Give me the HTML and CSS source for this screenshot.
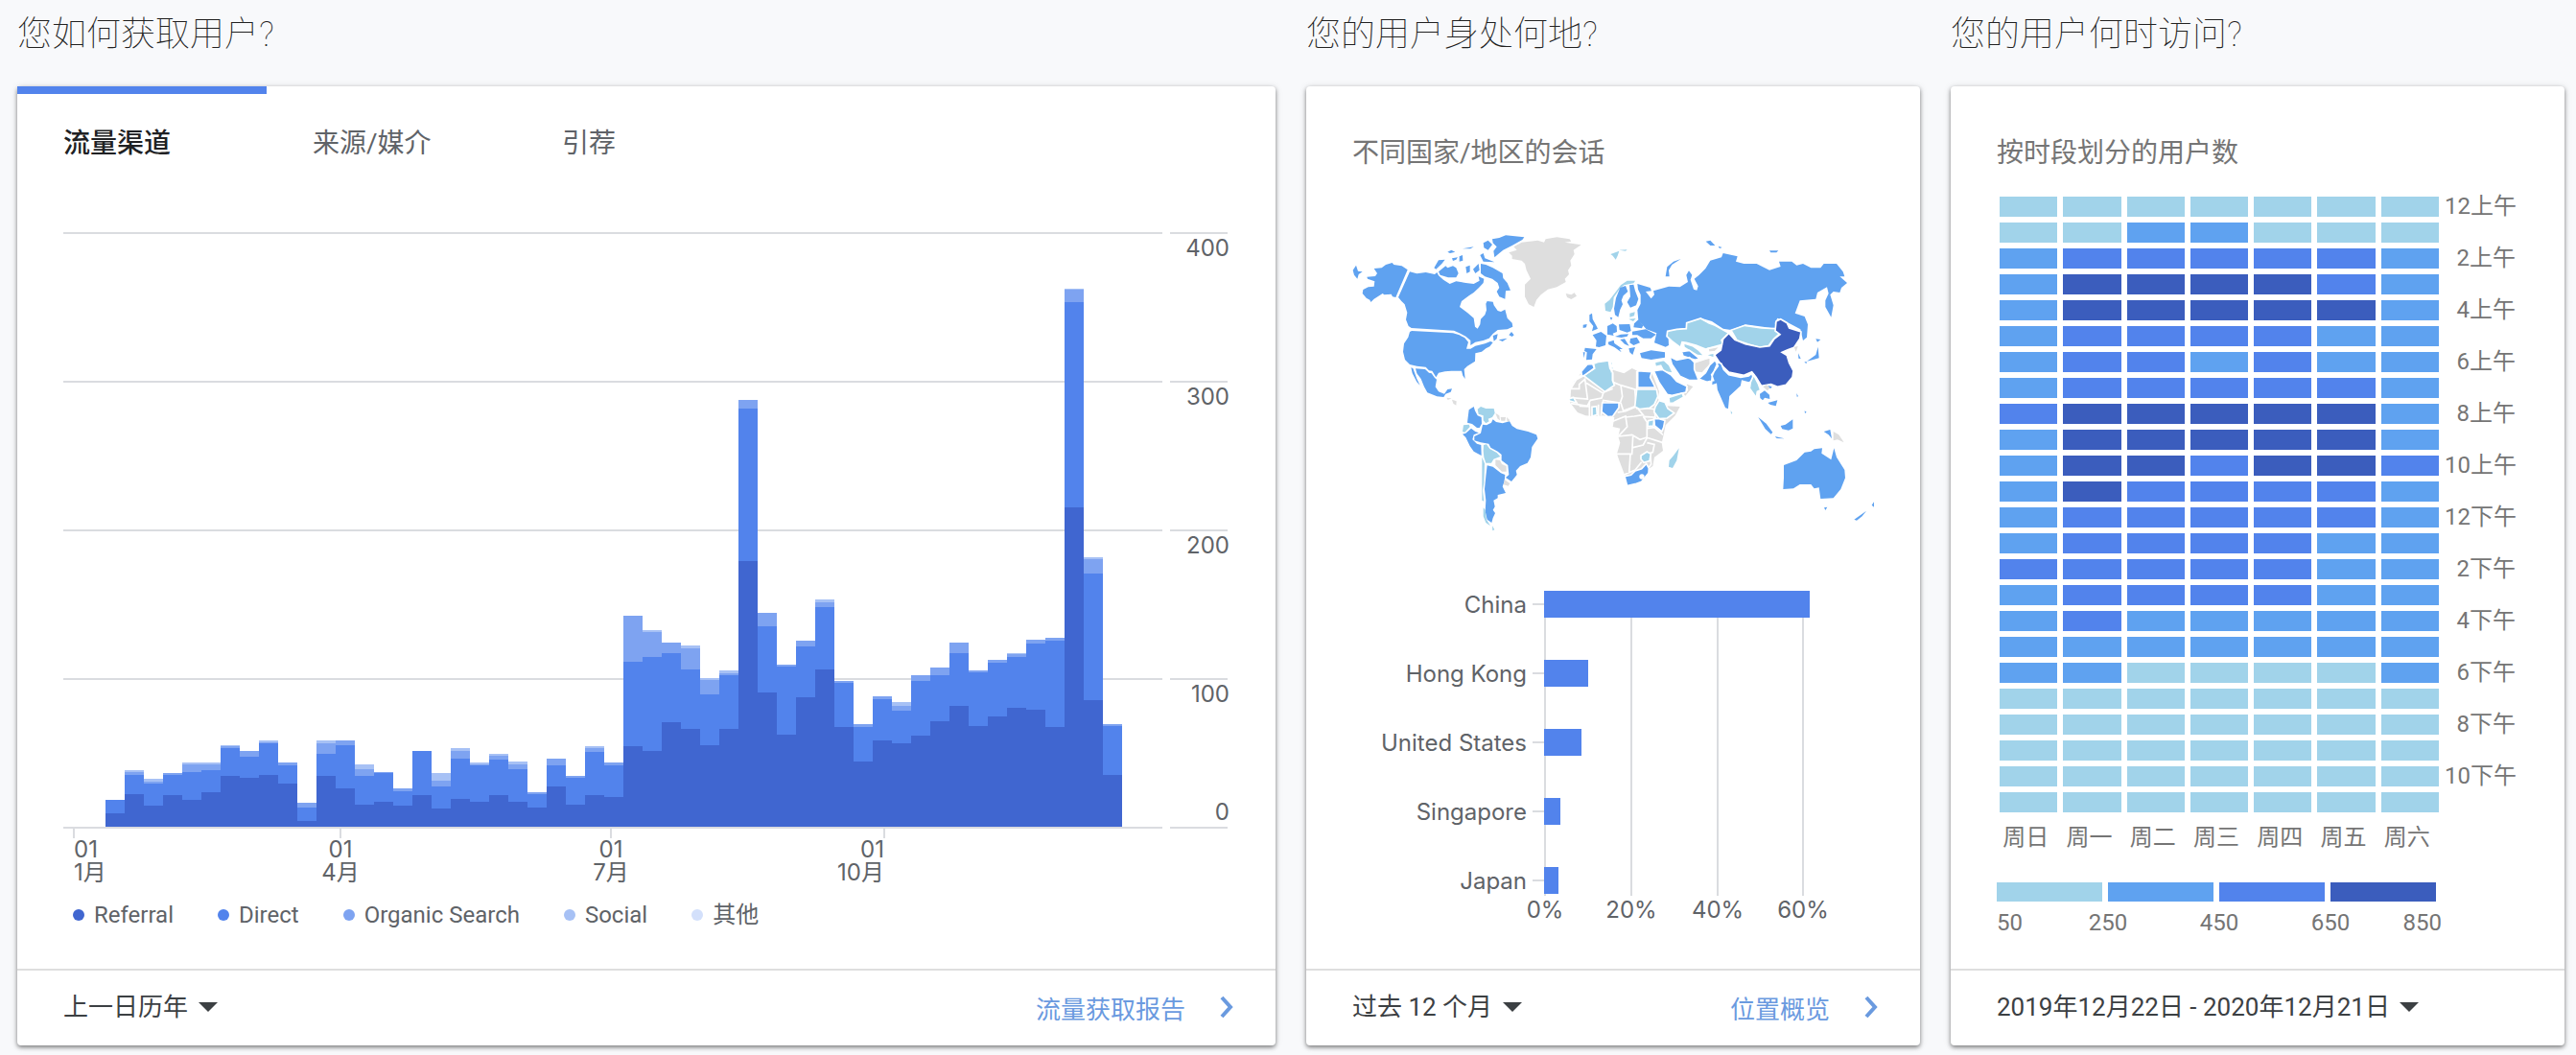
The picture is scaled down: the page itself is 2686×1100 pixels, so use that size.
FILE: index.html
```html
<!DOCTYPE html>
<html lang="zh-CN">
<head>
<meta charset="utf-8">
<meta name="viewport" content="width=device-width, initial-scale=1">
<title>流量与用户概览</title>
<link rel="stylesheet" href="styles.css">
</head>
<body>
<main class="dashboard">

  <section class="panel">
    <h2 class="panel-title">您如何获取用户?</h2>
    <article class="card">
      <div class="card-body">
        <div class="tabs" role="tablist">
          <button class="tab is-active" type="button" role="tab" aria-selected="true">流量渠道</button>
          <button class="tab" type="button" role="tab" aria-selected="false">来源/媒介</button>
          <button class="tab" type="button" role="tab" aria-selected="false">引荐</button>
        </div>
        <svg class="channel-chart" viewBox="0 0 1216 684" role="img" aria-label="流量渠道">
          <g class="grid">
            <path d="M0 1H1146M1154 1H1214M0 156H1146M1154 156H1214M0 311H1146M1154 311H1214M0 466H1146M1154 466H1214M0 621H1146M1154 621H1214"/>
            <path d="M11 622V632M289 622V632M571 622V632M856 622V632"/>
          </g>
          <g id="channel-bars" shape-rendering="crispEdges"></g>
          <g class="axis" text-anchor="end">
            <text x="1216" y="25">400</text>
            <text x="1216" y="180">300</text>
            <text x="1216" y="335">200</text>
            <text x="1216" y="490">100</text>
            <text x="1216" y="613">0</text>
          </g>
          <g class="axis">
            <text x="11" y="652">01</text><text x="11" y="676">1月</text>
            <g text-anchor="middle">
              <text x="289" y="652">01</text><text x="289" y="676">4月</text>
              <text x="571" y="652">01</text><text x="571" y="676">7月</text>
            </g>
            <g text-anchor="end">
              <text x="856" y="652">01</text><text x="856" y="676">10月</text>
            </g>
          </g>
        </svg>
        <ul class="series">
          <li class="series-item referral">Referral</li>
          <li class="series-item direct">Direct</li>
          <li class="series-item organic">Organic Search</li>
          <li class="series-item social">Social</li>
          <li class="series-item other">其他</li>
        </ul>
      </div>
      <footer class="card-footer">
        <label class="range">
          <select class="range-select" aria-label="日期范围"><option>上一日历年</option></select>
          <svg class="caret" viewBox="0 0 20 10" aria-hidden="true"><path d="M0 0H20L10 10Z"/></svg>
        </label>
        <a class="report-link" href="#acquisition">流量获取报告
          <svg class="chevron" viewBox="0 0 14 24" aria-hidden="true"><path d="M2 2L11 12L2 22"/></svg>
        </a>
      </footer>
    </article>
  </section>

  <section class="panel">
    <h2 class="panel-title">您的用户身处何地?</h2>
    <article class="card">
      <div class="card-body">
        <h3 class="chart-title">不同国家/地区的会话</h3>
        <svg class="world-map" viewBox="60 0 1632 1050" role="img" aria-label="世界地图">
          <!-- North America -->
          <g class="mid">
            <path d="M128 180L152 178L165 168L185 162L190 168L215 172L233 184L196 270L186 268L182 260L160 262L155 258L128 275L118 285L115 278L104 272L92 258L94 246L110 238L128 236L130 220L108 212L106 206L132 204L138 195Z"/>
            <path d="M62 185L72 170L78 188L92 190L80 198L76 212L66 200Z"/>
            <path d="M240 190L262 196L290 192L318 198L325 192L330 202L345 215L365 228L385 220L415 225L440 228L458 218L455 205L472 212L470 225L456 240L440 255L425 265L402 282L396 300L420 318L440 335L444 362L452 368L460 355L462 338L475 325L480 310L478 290L482 282L500 284L503 295L515 312L525 315L538 308L545 335L560 350L562 362L545 370L515 372L500 384L488 398L470 405L445 410L430 420L430 405L415 392L395 382L378 374L245 366L236 360L228 340L232 318L224 292L214 282L204 270Z"/>
            <path d="M550 388L558 378L566 388L560 393ZM500 390L515 385L512 400L503 407ZM518 403L545 398L530 408Z"/>
            <path d="M246 375L375 382L395 388L412 397L423 410L417 431L430 431L445 422L475 415L492 408L500 411L490 424L478 430L465 440L445 445L444 470L420 485L410 495L413 525L406 515L402 500L370 500L350 502L330 506L322 520L310 500L300 499L290 488L262 485L240 480L225 465L219 440L222 415L235 395L240 378Z"/>
            <path d="M258 493L288 495L300 506L308 508L318 522L324 527L320 550L330 565L348 572L358 558L372 556L368 566L352 572L346 582L325 580L295 568L285 550L275 525L262 508ZM244 490L250 492L262 525L272 545L262 535L248 508Z"/>
            <path d="M498 88L520 84L540 76L598 82L592 90L560 108L532 122L520 132L505 145L502 125L512 112L500 100ZM470 100L485 92L498 105L485 122L472 115ZM358 128L370 122L382 128L366 132ZM316 178L330 154L350 152L340 165L322 182ZM330 190L352 172L358 178L375 172L385 178L392 195L385 208L360 208L335 200ZM395 142L405 138L406 155L395 158ZM372 148L390 145L385 152L375 156ZM405 118L440 112L430 118ZM460 138L470 132L475 148L505 160L470 158ZM415 175L428 170L428 190L418 195ZM438 182L455 165L458 185L445 195Z"/>
            <path d="M462 165L478 168L500 178L530 195L532 210L545 225L555 248L540 250L538 275L520 268L512 252L520 240L515 225L498 212L475 205L462 195Z"/>
          </g>
          <path class="none" d="M550 130L575 122L565 112L590 98L640 92L660 98L665 88L700 82L740 88L745 95L725 98L776 106L752 122L755 135L742 155L745 170L735 185L738 198L725 212L728 222L700 238L672 245L650 262L636 278L628 300L612 292L600 268L600 230L618 212L605 185L600 165L590 155L560 150L560 140ZM728 258L745 262L755 256L762 266L745 276L732 270ZM372 590L386 595L385 608L376 602ZM355 584L371 586L359 591Z"/>
          <!-- South America -->
          <path class="mid" d="M425 622L440 612L444 625L452 640L464 645L465 665L458 678L450 678L435 666L420 662L422 645ZM432 680L445 690L456 694L440 700L436 715L450 728L463 732L464 765L440 752L428 735L415 708L405 698L415 695ZM468 668L480 670L495 662L500 652L510 660L530 664L552 658L560 672L575 682L610 690L636 700L640 712L622 738L618 770L608 788L585 798L572 812L575 825L558 846L540 834L550 825L547 795L527 780L527 762L515 752L493 740L487 728L462 724L442 718L442 705L462 695ZM482 796L500 800L525 820L538 825L536 845L530 862L540 882L515 888L515 898L502 905L506 925L500 935L507 945L500 960L496 975L482 965L476 940L478 905L474 870L478 830Z"/>
          <path class="low" d="M452 620L462 612L478 618L503 618L506 632L498 645L485 650L488 658L478 664L470 655L470 640L455 635ZM408 670L425 668L428 675L412 692L405 690ZM471 732L480 730L490 744L512 756L523 768L502 776L495 788L478 788L472 770L470 750ZM466 770L474 790L472 850L468 875L472 908L466 905L466 860ZM470 928L476 935L480 965L492 985L478 975L470 955ZM498 985L505 997L499 1000Z"/>
          <path class="none" d="M508 632L520 640L522 655L515 650ZM524 645L540 645L538 656L526 656ZM543 645L553 655L545 660ZM508 778L522 780L528 792L542 798L542 815L528 815L508 795ZM536 840L553 852L548 860L534 856Z"/>
          <path class="low" d="M868 135L895 125L890 140L884 152L875 140ZM895 122L920 121L915 125Z"/>
          <!-- Africa and Europe -->
          <g transform="translate(720 180)">
            <path class="none" d="M24 380L60 318L75 300L140 290L158 318L190 328L215 312L232 320L275 322L285 345L300 385L296 408L325 430L365 432L350 460L320 490L315 515L308 545L312 570L285 590L280 618L262 630L250 660L230 672L200 678L192 645L175 600L168 580L178 545L172 525L178 500L155 495L160 465L125 460L95 462L70 460L45 450L22 420Z"/>
            <path class="borders" d="M24 376H50V362L68 346L76 408L24 404M72 358L125 390L120 405L85 412L75 430L24 422M125 388L155 376M155 325V355L180 365L230 380V320M180 365L185 400L178 420L125 412L118 460M180 420L188 445L228 430L224 378M170 450L195 446L228 432L250 458L222 462L195 465M228 438L250 435L285 440L288 465L250 463M155 478L195 462L200 495L172 525L215 520L240 535L262 528V480L250 463M262 500L285 497L312 520M260 528L312 545M168 580L215 580L218 525M218 560L250 552L262 530M210 580L206 640M190 645L225 630L245 605M262 545L285 550L280 575L245 585M272 580L275 612L262 630M110 425V462M82 415V462M50 430L82 432"/>
            <g class="bordered">
              <path class="low" d="M64 335L98 312L95 298L110 292L142 288L146 312L154 325L154 350L160 365L130 385ZM148 290L156 295L153 305L158 312L151 320ZM230 378H292L296 400L285 425L270 436L240 440L224 432ZM288 432L300 413L318 418L327 438L347 452L325 468L300 470L284 448ZM266 476L284 472L282 492L264 494ZM243 585L262 573L274 580L270 602L252 607L243 596ZM90 433L104 431L106 457L90 462ZM16 408L32 403L42 420L20 414Z"/>
              <path class="mid" d="M56 322L75 300L92 298L97 312L66 334L40 348L24 372L32 350L58 333ZM233 320L277 323L272 340L288 372H233ZM284 470L300 470L318 475L314 497L308 510L286 492ZM122 420L174 420L174 435L155 462L140 464L120 448ZM192 650L212 646L225 633L245 626L260 610L268 625L267 640L245 667L225 674L200 680Z"/>
            </g>
            <circle class="hole" cx="246" cy="651" r="8"/>
            <path class="low" d="M332 600L345 585L362 562L355 600L342 624L330 620ZM130 110L145 98L165 72L180 52L200 38L225 38L220 46L190 52L175 66L158 90L155 120L148 136L132 132ZM208 140L224 136L222 148L208 152ZM205 158L227 156L219 165Z"/>
            <path class="mid" d="M165 92L178 60L195 54L202 72L188 85L182 100L186 112L178 128L172 152L162 145L159 125ZM207 52L220 50L225 70L235 95L228 115L210 122L200 105L210 88ZM82 145L90 140L92 158L104 180L108 188L90 196L94 180L82 165ZM62 176L74 174L72 184L62 186ZM92 208L118 198L135 210L132 240L112 246L102 244L104 225ZM68 248L104 252L92 268L90 284L72 286L74 262L66 258ZM62 262H68L65 280ZM138 180L155 172L167 180L168 198L155 203L158 210L138 206ZM146 152L154 154L150 162ZM174 175L208 174L212 195L200 200L176 192ZM222 172L235 160L250 178L246 187L220 184ZM216 197L258 190L290 206L275 218L250 218L232 208L216 208ZM210 219L230 215L240 232L220 240L208 232ZM140 230L158 224L160 234L186 252L176 252L182 262L160 246L142 238ZM162 213L180 206L204 205L200 212L182 216ZM178 222L192 220L206 242L192 236ZM205 250L225 246L217 270L208 262ZM240 265L275 256L318 262V278L275 285L245 280Z"/>
          </g>
          <!-- Asia and Oceania -->
          <g transform="translate(870 0)">
            <path class="mid" d="M82 228L122 240L126 250L108 252L125 274L135 262L132 250L180 236L215 238L240 222L235 200L243 187L253 200L248 215L258 245L268 248L272 235L260 212L275 200L295 180L310 155L345 145L350 132L395 142L390 158L415 165L455 165L495 185L530 174L525 158L565 158L580 170L600 165L625 178L655 178L665 165L705 165L725 190L730 205L715 205L738 225L720 240L715 255L695 252L685 262L695 295L688 332L670 300L670 280L680 258L675 238L645 255L640 275L590 280L575 320L605 330L615 355L612 395L600 405L592 370L545 345L520 335L512 350L515 368L475 362L420 355L375 372L350 368L315 345L280 335L240 350L235 365L205 370L178 378L180 420L170 425L135 412L142 382L110 370L85 342L82 310L92 290L92 262L84 245ZM170 205L175 175L195 158L218 150L190 168L180 185L182 205ZM296 95L310 92L325 108L310 108ZM335 110L347 114L339 117ZM495 124H523L517 130H499Z"/>
            <g class="bordered">
              <path class="low" d="M176 376L205 370L235 368L236 350L280 336L305 350L325 358L368 382L345 404L350 417L325 424L295 432L265 420L235 412L222 410L217 427L190 407L174 392ZM375 373L418 358L470 366L514 368L528 382L507 402L492 422L465 427L430 417L393 404Z"/>
              <path class="high" d="M350 400L368 382L387 403L420 416L465 426L495 422L510 400L528 386L513 375L516 345L530 338L550 350L557 366L594 378L590 400L572 427L552 434L534 442L550 452L557 475L570 500L567 520L547 544L520 550L500 542L470 547L453 520L440 503L415 514L368 504L343 480L323 450L343 435Z"/>
              <path class="low" d="M226 413L255 422L275 436L292 454L270 452L245 437L228 427ZM293 450L322 444L322 460ZM136 472L165 466L182 482L194 508L165 503L155 484L138 488Z"/>
              <path class="none" d="M303 430L342 423L325 440L305 442ZM256 475L310 458L310 480L285 507L260 504ZM233 538L260 548L232 582L223 572L238 560Z"/>
              <path class="mid" d="M220 440L245 436L277 462L262 466L225 454ZM308 482L325 466L334 485L314 512L320 530L300 535L273 525L295 506ZM183 455L205 466L245 458L260 473L260 495L274 530L245 530L215 517L190 480ZM133 500L160 496L187 512L205 533L237 548L234 567L190 577L175 574L150 537ZM316 515L334 473L345 478L352 496L368 512L405 520L430 516L440 508L447 530L430 537L410 532L407 548L372 580L368 622L355 617L330 560L328 542L313 547Z"/>
              <path class="low" d="M446 513L460 540L467 560L457 565L454 584L433 555L436 535ZM180 583L222 570L227 582L195 600L182 602Z"/>
            </g>
            <path class="none" d="M475 550L485 544L497 552L489 562ZM572 425L584 423L578 440ZM695 690L712 700L728 724L708 715L695 718Z"/>
            <path class="low" d="M374 624L379 632L375 635Z"/>
            <path class="mid" d="M465 572L480 562L495 575L496 588L480 584L474 592L466 585ZM490 600L520 592L515 610L498 606ZM490 546L503 550L498 556ZM460 645L485 665L505 692L500 698L482 682ZM512 705L542 712L518 711ZM530 672L545 668L568 652V680L555 686L535 682ZM665 690L685 684L690 712L680 700ZM580 570L585 580L581 581ZM605 625L611 629L606 633ZM585 445L593 462L586 461ZM640 400L655 402L645 410ZM647 425L650 460L632 465L612 470L640 450ZM604 472L612 472L610 478Z"/>
            <path class="mid" d="M540 795L580 780L605 755L625 752L635 745L660 742L658 758L688 778L697 742L705 770L730 810L732 835L718 870L695 898L655 900L650 865L635 868L625 855L590 855L570 868L538 870L540 835ZM666 928L676 926L670 936ZM760 965L798 938L785 955L768 968ZM815 920L822 910V926Z"/>
          </g>
        </svg>
        <svg class="country-chart" viewBox="0 0 544 364" role="img" aria-label="各国家/地区的会话占比">
          <path class="grid" d="M201 16V334M291 16V334M381 16V334M470 16V334M188 30H200M188 102H200M188 174H200M188 246H200M188 318H200"/>
          <path class="bar" d="M200 16H477V44H200ZM200 88H246V116H200ZM200 160H239V188H200ZM200 232H217V260H200ZM200 304H215V332H200Z"/>
          <g class="axis" text-anchor="end">
            <text x="182" y="39">China</text>
            <text x="182" y="111">Hong Kong</text>
            <text x="182" y="183">United States</text>
            <text x="182" y="255">Singapore</text>
            <text x="182" y="327">Japan</text>
          </g>
          <g class="axis" text-anchor="middle">
            <text x="201" y="357">0%</text>
            <text x="291" y="357">20%</text>
            <text x="381" y="357">40%</text>
            <text x="470" y="357">60%</text>
          </g>
        </svg>
      </div>
      <footer class="card-footer">
        <label class="range">
          <select class="range-select" aria-label="日期范围"><option>过去 12 个月</option></select>
          <svg class="caret" viewBox="0 0 20 10" aria-hidden="true"><path d="M0 0H20L10 10Z"/></svg>
        </label>
        <a class="report-link" href="#location">位置概览
          <svg class="chevron" viewBox="0 0 14 24" aria-hidden="true"><path d="M2 2L11 12L2 22"/></svg>
        </a>
      </footer>
    </article>
  </section>

  <section class="panel">
    <h2 class="panel-title">您的用户何时访问?</h2>
    <article class="card">
      <div class="card-body">
        <h3 class="chart-title">按时段划分的用户数</h3>
        <table class="heatmap" aria-label="按时段划分的用户数">
          <tbody id="heatmap-hours"></tbody>
          <tfoot>
            <tr>
              <th scope="col">周日</th><th scope="col">周一</th><th scope="col">周二</th><th scope="col">周三</th><th scope="col">周四</th><th scope="col">周五</th><th scope="col">周六</th><td class="hour"></td>
            </tr>
          </tfoot>
        </table>
        <div class="scale">
          <div class="scale-colors"><span class="level-a"></span><span class="level-b"></span><span class="level-c"></span><span class="level-d"></span></div>
          <div class="scale-labels"><span>50</span><span>250</span><span>450</span><span>650</span><span>850</span></div>
        </div>
      </div>
      <footer class="card-footer">
        <label class="range">
          <select class="range-select" aria-label="日期范围"><option>2019年12月22日 - 2020年12月21日</option></select>
          <svg class="caret" viewBox="0 0 20 10" aria-hidden="true"><path d="M0 0H20L10 10Z"/></svg>
        </label>
      </footer>
    </article>
  </section>

</main>
<script src="script.js"></script>
</body>
</html>
```
FILE: styles.css
```css
* {
  box-sizing: border-box;
}

body {
  margin: 0;
  background: #f8f9fb;
  color: #3c4043;
  font-family: Roboto, "Noto Sans CJK SC", sans-serif;
  font-size: 24px;
}

.dashboard {
  display: grid;
  grid-template-columns: 41fr 20fr 20fr;
  gap: 32px;
  padding: 0 12px 10px 18px;
}

.panel {
  display: flex;
  flex-direction: column;
  min-width: 0;
}

.panel-title {
  margin: 0 0 18px;
  font-size: 36px;
  line-height: 72px;
  font-weight: 100;
  color: #212121;
}

.card {
  flex: 1;
  display: flex;
  flex-direction: column;
  background: #fff;
  border-radius: 4px;
  box-shadow: 0 2px 4px rgba(0, 0, 0, 0.45), 0 1px 8px rgba(0, 0, 0, 0.12);
}

.card-body {
  flex: 1;
  padding: 0 48px 34px;
}

.card-body svg {
  display: block;
  width: 100%;
}

/* Tabs */
.tabs {
  display: flex;
  margin: 0 -48px 46px;
}

.tab {
  width: 260px;
  height: 106px;
  padding: 0 48px;
  border: 0;
  border-top: 8px solid transparent;
  background: none;
  font: inherit;
  font-size: 28px;
  text-align: left;
  color: #5f6368;
  white-space: nowrap;
}

.tab.is-active {
  border-top-color: #5283ec;
  color: #202124;
  font-weight: 500;
}

/* Charts */
.grid {
  fill: none;
  stroke: #dadce0;
  stroke-width: 2;
}

.axis {
  fill: #5f6368;
  font-family: Inter, "Noto Sans CJK SC", sans-serif;
  font-size: 24px;
}

.bar {
  fill: #5283ec;
}

.referral { --series: #4066d0; }
.direct { --series: #5283ec; }
.organic { --series: #7ea3f1; }
.social { --series: #a7c1f5; }
.other { --series: #d3e0fb; }

.channel-chart path[class] {
  fill: var(--series);
}

.series {
  display: flex;
  gap: 46px;
  margin: 16px 0 10px 10px;
  padding: 0;
  list-style: none;
  line-height: 24px;
  color: #5f6368;
}

.series-item {
  display: flex;
  align-items: center;
  gap: 10px;
}

.series-item::before {
  content: "";
  width: 12px;
  height: 12px;
  border-radius: 50%;
  background: var(--series);
}

.chart-title {
  margin: 0;
  padding-top: 50px;
  font-size: 28px;
  line-height: 40px;
  font-weight: 400;
  color: #757575;
}

/* World map */
.world-map {
  margin-top: 40px;
}

.mid { fill: #5fa2f0; }
.low { fill: #a1d3ea; }
.high { fill: #3b5dbd; }
.none { fill: #dedede; }
.hole { fill: #fff; }

.borders,
.bordered {
  stroke: #fff;
  stroke-width: 5;
}

.borders {
  fill: none;
}

.country-chart {
  margin-top: 30px;
}

/* Heat map */
.heatmap {
  width: 100%;
  margin-top: 22px;
  table-layout: fixed;
  border-collapse: collapse;
  line-height: 21px;
  color: #757575;
}

.heatmap td {
  height: 27px;
  padding: 3px;
  background-clip: content-box;
}

.heatmap .hour {
  width: 80px;
  text-align: right;
  white-space: nowrap;
}

.heatmap tfoot th {
  height: 46px;
  padding: 0 6px 0 0;
  font-weight: 400;
}

.level-a { background-color: #a1d3ea; }
.level-b { background-color: #5fa2f0; }
.level-c { background-color: #5283ec; }
.level-d { background-color: #3b5dbd; }

.scale {
  margin: 24px 80px 0 0;
  color: #757575;
}

.scale-colors {
  display: grid;
  grid-template-columns: repeat(4, 1fr);
  gap: 6px;
  height: 20px;
  margin-right: 6px;
}

.scale-labels {
  display: grid;
  grid-template-columns: 1fr 2fr 2fr 2fr 1fr;
  margin-top: 8px;
  line-height: 28px;
  text-align: center;
}

.scale-labels span:first-child {
  text-align: left;
}

.scale-labels span:last-child {
  text-align: right;
}

/* Footer */
.card-footer {
  display: flex;
  align-items: center;
  justify-content: space-between;
  height: 80px;
  padding: 0 44px 2px 48px;
  border-top: 2px solid #dedede;
  font-size: 26px;
}

.range {
  display: flex;
  align-items: center;
  gap: 10px;
}

.range-select {
  appearance: none;
  padding: 0;
  border: 0;
  background: none;
  font: inherit;
  color: #3c4043;
}

.caret {
  width: 20px;
  height: 10px;
  fill: #3c4043;
}

.report-link {
  display: flex;
  align-items: center;
  gap: 36px;
  color: #6a9adf;
  text-decoration: none;
}

.chevron {
  width: 14px;
  height: 24px;
  fill: none;
  stroke: #6a9adf;
  stroke-width: 4;
}
```
FILE: script.js
```js
// Weekly columns as the top edge of each layer: referral, direct, organic, social.
const weeks = [
  [606, 592, 592, 592], [586, 566, 563, 561], [598, 575, 573, 570], [587, 566, 564, 564],
  [592, 563, 555, 553], [584, 561, 555, 553], [567, 538, 536, 535], [569, 547, 541, 541],
  [566, 533, 532, 530], [575, 556, 553, 553], [614, 600, 595, 595], [567, 544, 533, 530],
  [580, 535, 530, 530], [597, 567, 560, 555], [594, 564, 563, 563], [598, 583, 580, 580],
  [587, 541, 541, 541], [601, 578, 572, 564], [591, 549, 541, 538], [594, 556, 555, 553],
  [587, 550, 546, 544], [594, 560, 555, 552], [600, 586, 584, 584], [578, 556, 549, 549],
  [597, 569, 567, 567], [587, 542, 538, 536], [589, 556, 553, 553], [536, 448, 400, 400],
  [541, 443, 417, 415], [511, 439, 428, 428], [518, 456, 434, 431], [535, 482, 467, 465],
  [518, 462, 460, 457], [343, 184, 175, 175], [480, 411, 397, 397], [524, 453, 451, 451],
  [485, 432, 426, 426], [456, 391, 386, 383], [516, 470, 468, 468], [552, 516, 513, 513],
  [530, 487, 484, 484], [533, 499, 494, 490], [525, 468, 462, 462], [510, 462, 454, 454],
  [494, 439, 428, 428], [515, 459, 457, 457], [505, 449, 446, 446], [496, 443, 440, 439],
  [498, 429, 425, 425], [516, 426, 423, 423], [287, 73, 60, 59], [488, 356, 341, 339],
  [566, 515, 513, 513]
];
const layers = ["referral", "direct", "organic", "social"];
const bars = document.getElementById("channel-bars");

// Lightest layer first, so that each darker one covers the part below it.
for (let layer = layers.length - 1; layer >= 0; layer--) {
  const path = document.createElementNS("http://www.w3.org/2000/svg", "path");
  const steps = weeks.map((week) => `V${week[layer]}h20`).join("");
  path.setAttribute("d", `M44 620${steps}V620Z`);
  path.setAttribute("class", layers[layer]);
  bars.append(path);
}

// One string per hour, Sunday to Saturday, from level a (fewest users) to d (most).
const hours = [
  "aaaaaaa", "aabbaaa", "bcccccb", "bddddcb", "bdddddb", "bccccbb", "bccbcbb", "bcccccb",
  "cdddddb", "bdddddb", "bddcddc", "bdccccb", "bcccccb", "bccccbb", "cccccbb", "bccccbb",
  "bcbbbbb", "bbbbbbb", "bbaaaab", "aaaaaaa", "aaaaaaa", "aaaaaaa", "aaaaaaa", "aaaaaaa"
];
const body = document.getElementById("heatmap-hours");

hours.forEach((levels, hour) => {
  const row = body.insertRow();
  for (const level of levels) {
    row.insertCell().className = `level-${level}`;
  }
  const label = row.insertCell();
  label.className = "hour";
  if (hour % 2 === 0) {
    label.textContent = `${hour % 12 || 12}${hour < 12 ? "上午" : "下午"}`;
  }
});
```
